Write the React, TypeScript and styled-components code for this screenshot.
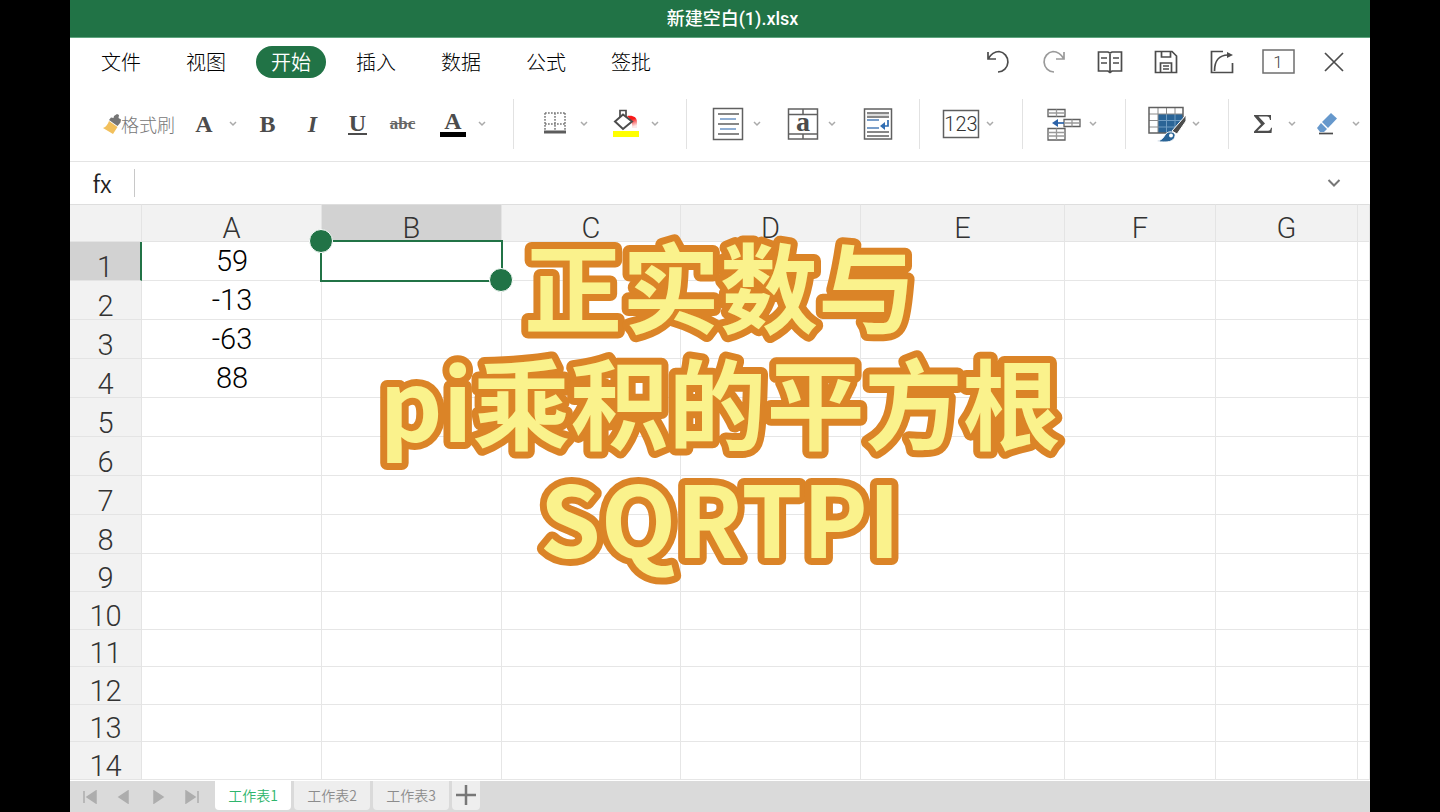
import React from "react";
import styled, { createGlobalStyle, css } from "styled-components";

const green = "#217346";
const ink = "#4c4c4c";
const uiFont = `"Noto Sans CJK SC", "Noto Sans", sans-serif`;
const gridFont = `Roboto, "Noto Sans", sans-serif`;

const GlobalStyle = createGlobalStyle`
  * { box-sizing: border-box; }
  body { margin: 0; background: #000; font-family: ${uiFont}; }
  button, input { font: inherit; color: inherit; border: 0; padding: 0; background: none; }
  button { cursor: pointer; }
  svg { display: block; flex: none; }
`;

const Window = styled.main`
  position: relative;
  display: flex;
  flex-direction: column;
  min-height: 100vh;
  margin: 0 70px;
  background: #fff;
  overflow: hidden;
`;

const TitleBar = styled.header`
  height: 38px;
  padding-left: 25px;
  background: ${green};
  color: #fff;
  text-align: center;
  border-bottom: 1px solid #5fa57f;
`;

const FileName = styled.h1`
  margin: 0;
  font-family: Roboto, "Noto Sans CJK SC", sans-serif;
  font-size: 18px;
  line-height: 38px;
  font-weight: 500;
`;

const MenuBar = styled.nav`
  display: flex;
  align-items: center;
  justify-content: space-between;
  height: 48px;
  padding: 0 8px 0 16px;
`;

const MenuList = styled.div`
  display: flex;
  gap: 15px;
`;

const MenuItem = styled.button<{ $active?: boolean }>`
  width: 70px;
  height: 32px;
  border-radius: 16px;
  font-size: 20px;
  line-height: 32px;
  font-weight: ${(p) => (p.$active ? 350 : 300)};
  color: ${(p) => (p.$active ? "#fff" : "#000")};
  ${(p) => p.$active && css`background: ${green};`}
`;

const QuickActions = styled.div`
  display: flex;
`;

const QuickButton = styled.button`
  display: flex;
  align-items: center;
  justify-content: center;
  width: 56px;
  height: 32px;
`;

const Toolbar = styled.div`
  display: flex;
  align-items: center;
  height: 76px;
  border-bottom: 1px solid #e4e4e4;
`;

const Group = styled.div<{ $gap?: number; $left?: number; $right?: number }>`
  display: flex;
  align-items: center;
  flex: none;
  height: 50px;
  gap: ${(p) => p.$gap ?? 0}px;
  padding: 0 ${(p) => p.$right ?? 28}px 0 ${(p) => p.$left ?? 21}px;
  border-right: 1px solid #e2e2e2;
  &:last-child { border-right: 0; }
`;

const Tool = styled.button<{ $width?: number }>`
  display: flex;
  align-items: center;
  justify-content: center;
  width: ${(p) => p.$width ?? 45}px;
  height: 40px;
`;

const LetterTools = styled.div`
  display: flex;
  padding: 0 8px;
`;

const PainterTool = styled(Tool)`
  width: 72px;
  margin-right: 9px;
  font-size: 18px;
  line-height: 24px;
  font-weight: 300;
  color: #777;
  white-space: nowrap;
`;

const DropTool = styled.button`
  display: flex;
  align-items: center;
  gap: 5px;
  flex: none;
  height: 40px;
`;

const IconSlot = styled.span`
  display: flex;
  align-items: center;
  justify-content: center;
  width: 40px;
`;

const Letter = styled.span<{ $size?: number; $look?: "italic" | "under" | "strike" | "bar" }>`
  font-family: "Liberation Serif", "Times New Roman", serif;
  font-size: ${(p) => p.$size ?? 24}px;
  line-height: 24px;
  font-weight: 700;
  color: ${ink};
  ${(p) => p.$look === "italic" && css`font-style: italic;`}
  ${(p) => p.$look === "under" && css`line-height: 20px; padding: 0 1px; border-bottom: 2px solid ${ink};`}
  ${(p) => p.$look === "strike" && css`color: #666; text-decoration: line-through;`}
  ${(p) => p.$look === "bar" && css`line-height: 22px; padding: 0 4px; border-bottom: 5px solid #000;`}
`;

const FormulaBar = styled.div`
  display: flex;
  align-items: center;
  height: 42px;
  padding-right: 29px;
`;

const FormulaLabel = styled.label`
  width: 64px;
  font-size: 24px;
  line-height: 28px;
  font-weight: 350;
  text-align: center;
  color: #222;
`;

const FormulaInput = styled.input`
  flex: 1;
  height: 28px;
  min-width: 0;
  padding: 0 10px;
  border-left: 1px solid #c8c8c8;
  font-size: 20px;
  outline: 0;
`;

const Sheet = styled.section`
  flex: 1;
  overflow: hidden;
`;

const Grid = styled.table`
  width: 100%;
  table-layout: fixed;
  border-collapse: separate;
  border-spacing: 0;
  font-family: ${gridFont};
  font-weight: 300;
  font-size: 29px;
  line-height: 30px;
`;

const Column = styled.col<{ $width?: number }>`
  width: ${(p) => (p.$width ? `${p.$width}px` : "auto")};
`;

const Row = styled.tr<{ $height: number }>`
  height: ${(p) => p.$height}px;
`;

const HeadCell = styled.th<{ $selected?: boolean; $row?: boolean }>`
  padding: 0;
  font-weight: 300;
  line-height: 26px;
  vertical-align: bottom;
  color: #333;
  background: ${(p) => (p.$selected ? "#d2d2d2" : "#f2f2f2")};
  border-right: 1px solid #e4e4e4;
  border-bottom: 1px solid #e4e4e4;
  ${(p) => !p.$row && css`border-top: 1px solid #dedede;`}
  ${(p) => p.$row && p.$selected && css`border-right: 2px solid ${green};`}
`;

const Cell = styled.td`
  position: relative;
  padding: 0 0 1px 1px;
  text-align: center;
  vertical-align: middle;
  color: #000;
  border-right: 1px solid #e6e6e6;
  border-bottom: 1px solid #e6e6e6;
`;

const Selection = styled.div`
  position: absolute;
  inset: -2px;
  border: 2px solid ${green};
  z-index: 1;
`;

const Handle = styled.span<{ $end?: boolean }>`
  position: absolute;
  width: 24px;
  height: 24px;
  border-radius: 50%;
  border: 1px solid #fff;
  background: ${green};
  ${(p) => (p.$end ? css`right: -12px; bottom: -12px;` : css`left: -13px; top: -13px;`)}
`;

const TabBar = styled.footer`
  display: flex;
  align-items: flex-start;
  height: 31px;
  padding-left: 3px;
  background: #dadada;
`;

const Pager = styled.div`
  display: flex;
  margin-right: 6px;
`;

const PagerButton = styled.button`
  display: flex;
  align-items: center;
  justify-content: center;
  width: 34px;
  height: 31px;
`;

const Tabs = styled.div`
  display: flex;
  gap: 3px;
`;

const Tab = styled.button<{ $active?: boolean; $narrow?: boolean }>`
  display: flex;
  align-items: center;
  justify-content: center;
  width: ${(p) => (p.$narrow ? 28 : 76)}px;
  height: 29px;
  padding-bottom: 2px;
  border-radius: 0 0 4px 4px;
  font-size: 14px;
  line-height: 26px;
  font-weight: 350;
  color: ${(p) => (p.$active ? "#2fb56c" : "#8c8c8c")};
  background: ${(p) => (p.$active ? "#fff" : "#eee")};
`;

const Caption = styled.h2`
  position: absolute;
  top: 228px;
  left: 0;
  right: 0;
  z-index: 2;
  margin: 0;
  pointer-events: none;
`;

const CaptionArt = styled.svg`
  width: 100%;
  height: 370px;
  overflow: visible;
`;

const CaptionLine = styled.text`
  font-size: 98px;
  font-weight: 700;
  text-anchor: middle;
  fill: #faf28c;
  stroke: #db8427;
  stroke-width: 14px;
  stroke-linejoin: round;
  paint-order: stroke fill;
`;

const Chevron = () => (
  <svg width="8" height="6" viewBox="0 0 8 6" fill="none" stroke="#aaa" strokeWidth="1.5">
    <path d="M1 1l3 3 3-3" />
  </svg>
);

const Drop = ({ label, children }: { label: string; children: React.ReactNode }) => (
  <DropTool aria-label={label}>
    <IconSlot>{children}</IconSlot>
    <Chevron />
  </DropTool>
);

const PainterIcon = () => (
  <svg width="18" height="20" viewBox="0 0 18 20">
    <path d="M11 2l3-2 2 1-.5 3 2.500 1.500-.5 3-3 3.500L6 6l2-2.500 2.500.5z" fill="#757575" />
    <path d="M6 7l8.500 6L10 20 0 14c3-1 5-4 6-7z" fill="#f2c05c" />
  </svg>
);

const UndoIcon = () => (
  <svg width="24" height="24" viewBox="0 0 24 24" fill="none" stroke={ink} strokeWidth="1.7">
    <path d="M2 2v7h8M2 9C5 4 9 1.500 13 1.500A10.300 10.300 0 0 1 12 22" />
  </svg>
);

const RedoIcon = () => (
  <svg width="24" height="24" viewBox="0 0 24 24" fill="none" stroke="#9a9a9a" strokeWidth="1.7">
    <path d="M22 2v7h-8M22 9C19 4 15 1.500 11 1.500A10.300 10.300 0 0 0 12 22" />
  </svg>
);

const BookIcon = () => (
  <svg width="26" height="24" viewBox="0 0 26 24" fill="none" stroke={ink} strokeWidth="1.7">
    <path d="M1.500 2H11l2 1 2-1h9.500v19H15l-2 1.500L11 21H1.500zM13 3v19" />
    <path d="M4 8h6M4 13h6M16 8h6M16 13h6" />
  </svg>
);

const SaveIcon = () => (
  <svg width="24" height="24" viewBox="0 0 24 24" fill="none" stroke={ink} strokeWidth="1.7">
    <path d="M1.500 1.500H18l4.500 4.500v16.500h-21z" />
    <path d="M7.500 1.500V7h9V1.500M6.500 22.500V13h11v9.500M9 16h6M9 19h6" />
  </svg>
);

const ShareIcon = () => (
  <svg width="24" height="24" viewBox="0 0 24 24" fill="none" stroke={ink} strokeWidth="1.7">
    <path d="M13 1.500H1.500v21h21V13M4.500 21C4.500 11 9 5 18 5" />
    <path d="M17 2l6 3-6 3z" fill={ink} stroke="none" />
  </svg>
);

const PageIcon = () => (
  <svg width="33" height="26" viewBox="0 0 33 26" fill="none">
    <rect x="1" y="1" width="31" height="23" stroke="#6e6e6e" strokeWidth="1.5" />
    <text x="16" y="19" textAnchor="middle" fontFamily="Roboto, sans-serif" fontWeight="300" fontSize="17" fill={ink}>1</text>
  </svg>
);

const CloseIcon = () => (
  <svg width="22" height="22" viewBox="0 0 22 22" fill="none" stroke={ink} strokeWidth="1.7">
    <path d="M2 2l18 18M20 2L2 20" />
  </svg>
);

const BorderIcon = () => (
  <svg width="22" height="24" viewBox="0 0 22 24" fill="none" stroke="#777" strokeWidth="1.5">
    <path d="M1 1v17M11 1v17M21 1v17M1 1h20M1 12h20" strokeDasharray="1.7 1.3" />
    <path d="M0 20h22" stroke="#5c5c5c" strokeWidth="3" />
  </svg>
);

const FillIcon = () => (
  <svg width="28" height="30" viewBox="0 0 28 30" fill="none">
    <defs>
      <linearGradient id="paint" x1="0" y1="0" x2="0.3" y2="1">
        <stop offset="0.4" stopColor="#f81818" />
        <stop offset="1" stopColor="#f12222" stopOpacity="0.1" />
      </linearGradient>
    </defs>
    <path d="M15 7c6-1 10 1 10 6v6h-5c1-4-1-8-5-12z" fill="url(#paint)" />
    <path d="M11 5.500l9 7-9 7.500L3 12.500z" fill="#fff" stroke={ink} strokeWidth="2" />
    <path d="M8 8V1.500h6V8" stroke={ink} strokeWidth="1.7" />
    <rect x="1" y="22" width="26" height="6" fill="#ff0" />
  </svg>
);

const AlignIcon = () => (
  <svg width="32" height="34" viewBox="0 0 32 34" fill="none" stroke="#606060" strokeWidth="1.5">
    <rect x="1.500" y="1.500" width="29" height="31" />
    <path d="M6 7h21M6 17h21M6 27h21" />
    <path d="M8 12h16M8 22h16" stroke="#6c95c6" />
  </svg>
);

const MergeIcon = () => (
  <svg width="32" height="34" viewBox="0 0 32 34" fill="none" stroke="#606060" strokeWidth="1.5">
    <rect x="1.500" y="2" width="29" height="30" />
    <path d="M1.500 7.500h29M1.500 27h29M16 2v5.500M16 27v5" />
    <text x="16" y="24" textAnchor="middle" fontFamily="Liberation Serif, serif" fontWeight="700" fontSize="28" fill={ink} stroke="none">a</text>
  </svg>
);

const WrapIcon = () => (
  <svg width="30" height="34" viewBox="0 0 30 34" fill="none" stroke="#606060" strokeWidth="1.5">
    <rect x="1.500" y="2" width="27" height="30" />
    <path d="M4 6h22M4 10h22M4 25h22M4 29h22" />
    <path d="M4 8h22" stroke="#cfcfcf" />
    <path d="M4 13h12M4 21h12" stroke="#4d7fb9" />
    <path d="M25 13v6h-5" stroke="#2f6db3" strokeWidth="1.7" />
    <path d="M22 15v8l-5-4z" fill="#2f6db3" stroke="none" />
  </svg>
);

const NumberIcon = () => (
  <svg width="38" height="30" viewBox="0 0 38 30" fill="none">
    <rect x="1.500" y="1.500" width="35" height="27" stroke="#606060" strokeWidth="1.5" />
    <text x="19" y="22" textAnchor="middle" fontFamily="Roboto, sans-serif" fontSize="20" fontWeight="300" fill="#333">123</text>
  </svg>
);

const InsertIcon = () => (
  <svg width="36" height="34" viewBox="0 0 36 34" fill="none" stroke="#606060" strokeWidth="1.3">
    <path d="M2 2.500h17v7H2zM18 12.500h16v7H18zM2 21.500h17V33H2z" />
    <path d="M2 6h17M10.500 2.500v7M18 16h16M26 12.500v7M2 25.500h17M2 29h17M10.500 21.500V33" stroke="#999" />
    <path d="M10 16h8" stroke="#2b62a8" strokeWidth="1.7" />
    <path d="M12 12v8l-6-4z" fill="#2b62a8" stroke="none" />
  </svg>
);

const TableStyleIcon = () => (
  <svg width="40" height="38" viewBox="0 0 40 38" fill="none">
    <path d="M2 2.500h34V28H2z" fill="#fff" />
    <path d="M11 9h25v6l-11 13H11z" fill="#2a6496" />
    <path d="M19.500 9v19M28 9v15M11 15.500h23M11 22h18" stroke="#6f9cc2" />
    <path d="M11 2.500V28M19.500 2.500V9M28 2.500V9M2 9h34M2 15.500h9M2 22h9" stroke="#8a8a8a" />
    <path d="M36 12V2.500H2V28h20" stroke="#606060" strokeWidth="1.5" />
    <path d="M39 10v6L30 29l-5-3z" fill={ink} stroke="#fff" />
    <path d="M10 36c5-1 6-3 8-6 2-4 8-4 10-1 1 5-4 8-9 8-4 0-7 0-9-1z" fill="#2a6496" stroke="#fff" />
    <circle cx="24" cy="30.500" r="2" fill="#fff" />
  </svg>
);

const SumIcon = () => (
  <svg width="20" height="20" viewBox="0 0 20 20" fill={ink}>
    <path d="M1 1h17v5h-1c-.5-2.500-1-3.500-3-3.500H5.500L12 9.500l-7.500 7.300H15c2 0 2.500-1 3-3h1L18.500 19H1v-1.500l7-7.300L1 2z" />
  </svg>
);

const EraserIcon = () => (
  <svg width="20" height="22" viewBox="0 0 20 22">
    <path d="M14 0l6 5.500-9 9.500-6-6z" fill="#6698cc" />
    <path d="M4 10l6 6-3 3H3l-3-4z" fill="#6698cc" />
    <path d="M2 20.500h14" stroke={ink} strokeWidth="1.7" />
  </svg>
);

const columns = [
  { name: "A", width: 180 },
  { name: "B", width: 180 },
  { name: "C", width: 179 },
  { name: "D", width: 180 },
  { name: "E", width: 204 },
  { name: "F", width: 151 },
  { name: "G", width: 142 },
  { name: "" },
];
const rowHeights = [39, 39, 39, 39, 39, 39, 39, 39, 38, 38, 37, 38, 37, 38];
const values: Record<string, string> = { A1: "59", A2: "-13", A3: "-63", A4: "88" };
const menus = ["文件", "视图", "开始", "插入", "数据", "公式", "签批"];

const quickActions = [
  { label: "撤销", icon: <UndoIcon /> },
  { label: "恢复", icon: <RedoIcon /> },
  { label: "阅读", icon: <BookIcon /> },
  { label: "保存", icon: <SaveIcon /> },
  { label: "分享", icon: <ShareIcon /> },
  { label: "窗口", icon: <PageIcon /> },
  { label: "关闭", icon: <CloseIcon /> },
];

const pagers = [
  { label: "第一个", d: "M1 1v12M13 1v12L4 7z" },
  { label: "上一个", d: "M11 1v12L2 7z" },
  { label: "下一个", d: "M3 1v12l9-6z" },
  { label: "最后一个", d: "M13 1v12M1 1v12l9-6z" },
];

export default function App() {
  return (
    <>
      <GlobalStyle />
      <Window>
        <TitleBar>
          <FileName>新建空白(1).xlsx</FileName>
        </TitleBar>

        <MenuBar>
          <MenuList>
            {menus.map((name) => (
              <MenuItem key={name} $active={name === "开始"}>{name}</MenuItem>
            ))}
          </MenuList>
          <QuickActions>
            {quickActions.map((a) => (
              <QuickButton key={a.label} aria-label={a.label}>{a.icon}</QuickButton>
            ))}
          </QuickActions>
        </MenuBar>

        <Toolbar>
          <Group $left={33} $right={27}>
            <PainterTool><PainterIcon />格式刷</PainterTool>
            <Drop label="字体"><Letter>A</Letter></Drop>
            <LetterTools>
              <Tool aria-label="加粗"><Letter>B</Letter></Tool>
              <Tool aria-label="倾斜"><Letter $look="italic">I</Letter></Tool>
              <Tool aria-label="下划线"><Letter $look="under">U</Letter></Tool>
              <Tool aria-label="删除线"><Letter $look="strike" $size={17}>abc</Letter></Tool>
            </LetterTools>
            <Drop label="字体颜色"><Letter $look="bar">A</Letter></Drop>
          </Group>
          <Group $gap={18} $right={27}>
            <Drop label="边框"><BorderIcon /></Drop>
            <Drop label="填充颜色"><FillIcon /></Drop>
          </Group>
          <Group $gap={22} $right={21}>
            <Drop label="对齐"><AlignIcon /></Drop>
            <Drop label="合并单元格"><MergeIcon /></Drop>
            <Tool aria-label="自动换行" $width={40}><WrapIcon /></Tool>
          </Group>
          <Group>
            <Drop label="数字格式"><NumberIcon /></Drop>
          </Group>
          <Group>
            <Drop label="插入单元格"><InsertIcon /></Drop>
          </Group>
          <Group>
            <Drop label="表格样式"><TableStyleIcon /></Drop>
          </Group>
          <Group $left={14} $right={9} $gap={11}>
            <Drop label="求和"><SumIcon /></Drop>
            <Drop label="清除"><EraserIcon /></Drop>
          </Group>
        </Toolbar>

        <FormulaBar>
          <FormulaLabel htmlFor="formula">fx</FormulaLabel>
          <FormulaInput id="formula" type="text" />
          <button aria-label="展开">
            <svg width="14" height="10" viewBox="0 0 14 10" fill="none" stroke="#777" strokeWidth="2">
              <path d="M1.500 2L7 7.500 12.500 2" />
            </svg>
          </button>
        </FormulaBar>

        <Sheet>
          <Grid>
            <colgroup>
              <Column $width={72} />
              {columns.map((c) => <Column key={c.name} $width={c.width} />)}
            </colgroup>
            <thead>
              <Row $height={38}>
                <HeadCell />
                {columns.map((c) => (
                  <HeadCell key={c.name} scope="col" $selected={c.name === "B"}>{c.name}</HeadCell>
                ))}
              </Row>
            </thead>
            <tbody>
              {rowHeights.map((height, i) => (
                <Row key={i} $height={height}>
                  <HeadCell scope="row" $row $selected={i === 0}>{i + 1}</HeadCell>
                  {columns.map((c) => (
                    <Cell key={c.name}>
                      {values[`${c.name}${i + 1}`]}
                      {c.name === "B" && i === 0 && (
                        <Selection><Handle /><Handle $end /></Selection>
                      )}
                    </Cell>
                  ))}
                </Row>
              ))}
            </tbody>
          </Grid>
        </Sheet>

        <TabBar>
          <Pager>
            {pagers.map((p) => (
              <PagerButton key={p.label} aria-label={p.label}>
                <svg width="14" height="14" viewBox="0 0 14 14" fill="#adadad">
                  <path d={p.d} stroke="#adadad" strokeWidth="1.5" />
                </svg>
              </PagerButton>
            ))}
          </Pager>
          <Tabs>
            <Tab $active>工作表1</Tab>
            <Tab>工作表2</Tab>
            <Tab>工作表3</Tab>
            <Tab $narrow aria-label="新建工作表">
              <svg width="20" height="20" viewBox="0 0 20 20" stroke="#777" strokeWidth="2.5">
                <path d="M10 0v20M0 10h20" />
              </svg>
            </Tab>
          </Tabs>
        </TabBar>

        <Caption>
          <CaptionArt>
            <CaptionLine x="50%" y="98">正实数与</CaptionLine>
            <CaptionLine x="50%" y="214">pi乘积的平方根</CaptionLine>
            <CaptionLine x="50%" y="330">SQRTPI</CaptionLine>
          </CaptionArt>
        </Caption>
      </Window>
    </>
  );
}
